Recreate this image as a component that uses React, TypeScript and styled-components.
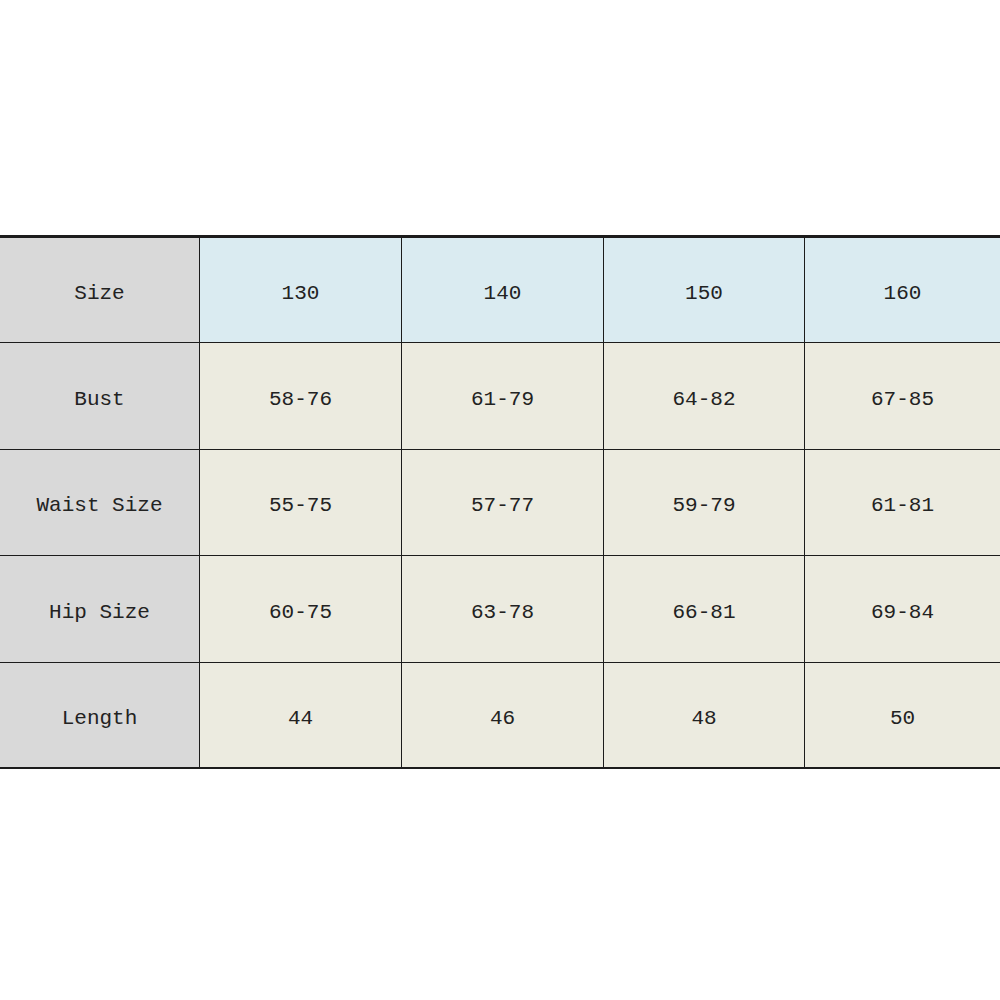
import React from "react";
import styled, { createGlobalStyle } from "styled-components";

const GlobalStyle = createGlobalStyle`
  html, body {
    margin: 0;
    padding: 0;
    background: #ffffff;
  }
`;

const Page = styled.div`
  width: 1000px;
  height: 1000px;
  padding-top: 235px;
  box-sizing: border-box;
  overflow: hidden;
`;

const Grid = styled.div`
  display: grid;
  grid-template-columns: 199px 201px 201px 200px 1fr;
  grid-template-rows: 104px 106px 105px 106px 104px;
  gap: 1px;
  background: #1c1c1c;
  border-top: 3px solid #1c1c1c;
  border-bottom: 2px solid #1c1c1c;
`;

type Kind = "label" | "head" | "body";

const bg: Record<Kind, string> = {
  label: "#d9d9d9",
  head: "#daebf1",
  body: "#ecebe0",
};

const Cell = styled.div<{ $kind: Kind }>`
  display: flex;
  align-items: center;
  justify-content: center;
  padding-top: 6px;
  background: ${(p) => bg[p.$kind]};
  color: #222222;
  font-family: "Liberation Mono", "DejaVu Sans Mono", monospace;
  font-size: 21px;
  white-space: pre;
`;

const rows: [string, string[]][] = [
  ["Size", ["130", "140", "150", "160"]],
  ["Bust", ["58-76", "61-79", "64-82", "67-85"]],
  ["Waist Size", ["55-75", "57-77", "59-79", "61-81"]],
  ["Hip Size", ["60-75", "63-78", "66-81", "69-84"]],
  ["Length", ["44", "46", "48", "50"]],
];

const App: React.FC = () => {
  return (
    <Page>
      <GlobalStyle />
      <Grid>
        {rows.map(([label, values], i) => (
          <React.Fragment key={label}>
            <Cell $kind="label">{label}</Cell>
            {values.map((v, j) => (
              <Cell key={j} $kind={i === 0 ? "head" : "body"}>
                {v}
              </Cell>
            ))}
          </React.Fragment>
        ))}
      </Grid>
    </Page>
  );
};

export default App;
